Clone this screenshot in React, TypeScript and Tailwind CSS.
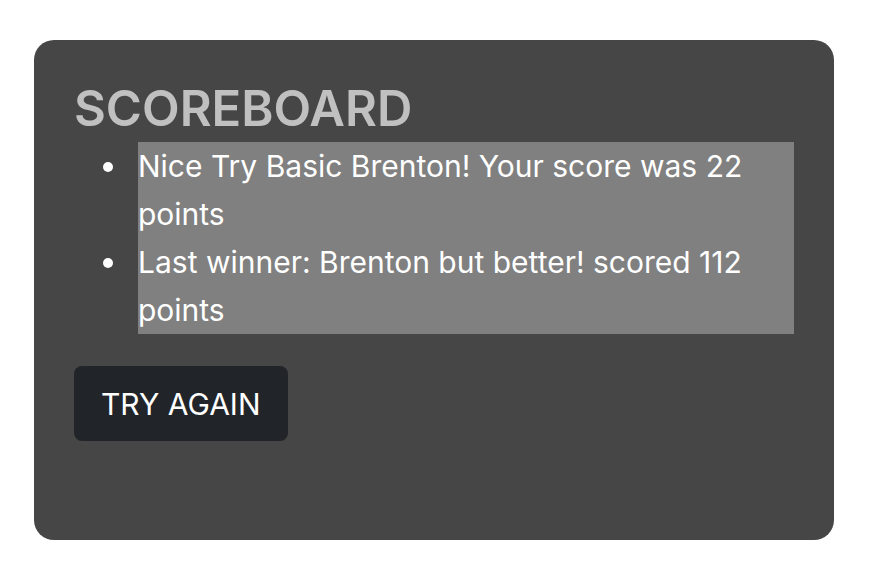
import React from 'react';

const entries = [
  'Nice Try Basic Brenton! Your score was 22 points',
  'Last winner: Brenton but better! scored 112 points',
];

const App = () => {
  return (
    <div className="min-h-screen bg-white pt-10 pl-[34px] font-['Inter',sans-serif]">
      <div className="w-[800px] h-[500px] rounded-[20px] bg-[#464646] p-10">
        <h2 className="text-[49px] leading-[48px] font-semibold text-[#c0c0c0] pt-[5px] mb-[9px]">SCOREBOARD</h2>
        <ul className="list-none pl-16 mb-8 text-white text-[30px] leading-[48px]">
          {entries.map(entry => (
            <li
              key={entry}
              className="relative bg-[#808080] before:content-[''] before:absolute before:left-[-35px] before:top-[20px] before:w-[10px] before:h-[10px] before:rounded-full before:bg-white"
            >
              {entry}
            </li>
          ))}
        </ul>
        <button className="bg-[#212529] text-white text-[30px] leading-[48px] h-[75px] px-[27px] rounded-lg">
          TRY AGAIN
        </button>
      </div>
    </div>
  );
};

export default App;
